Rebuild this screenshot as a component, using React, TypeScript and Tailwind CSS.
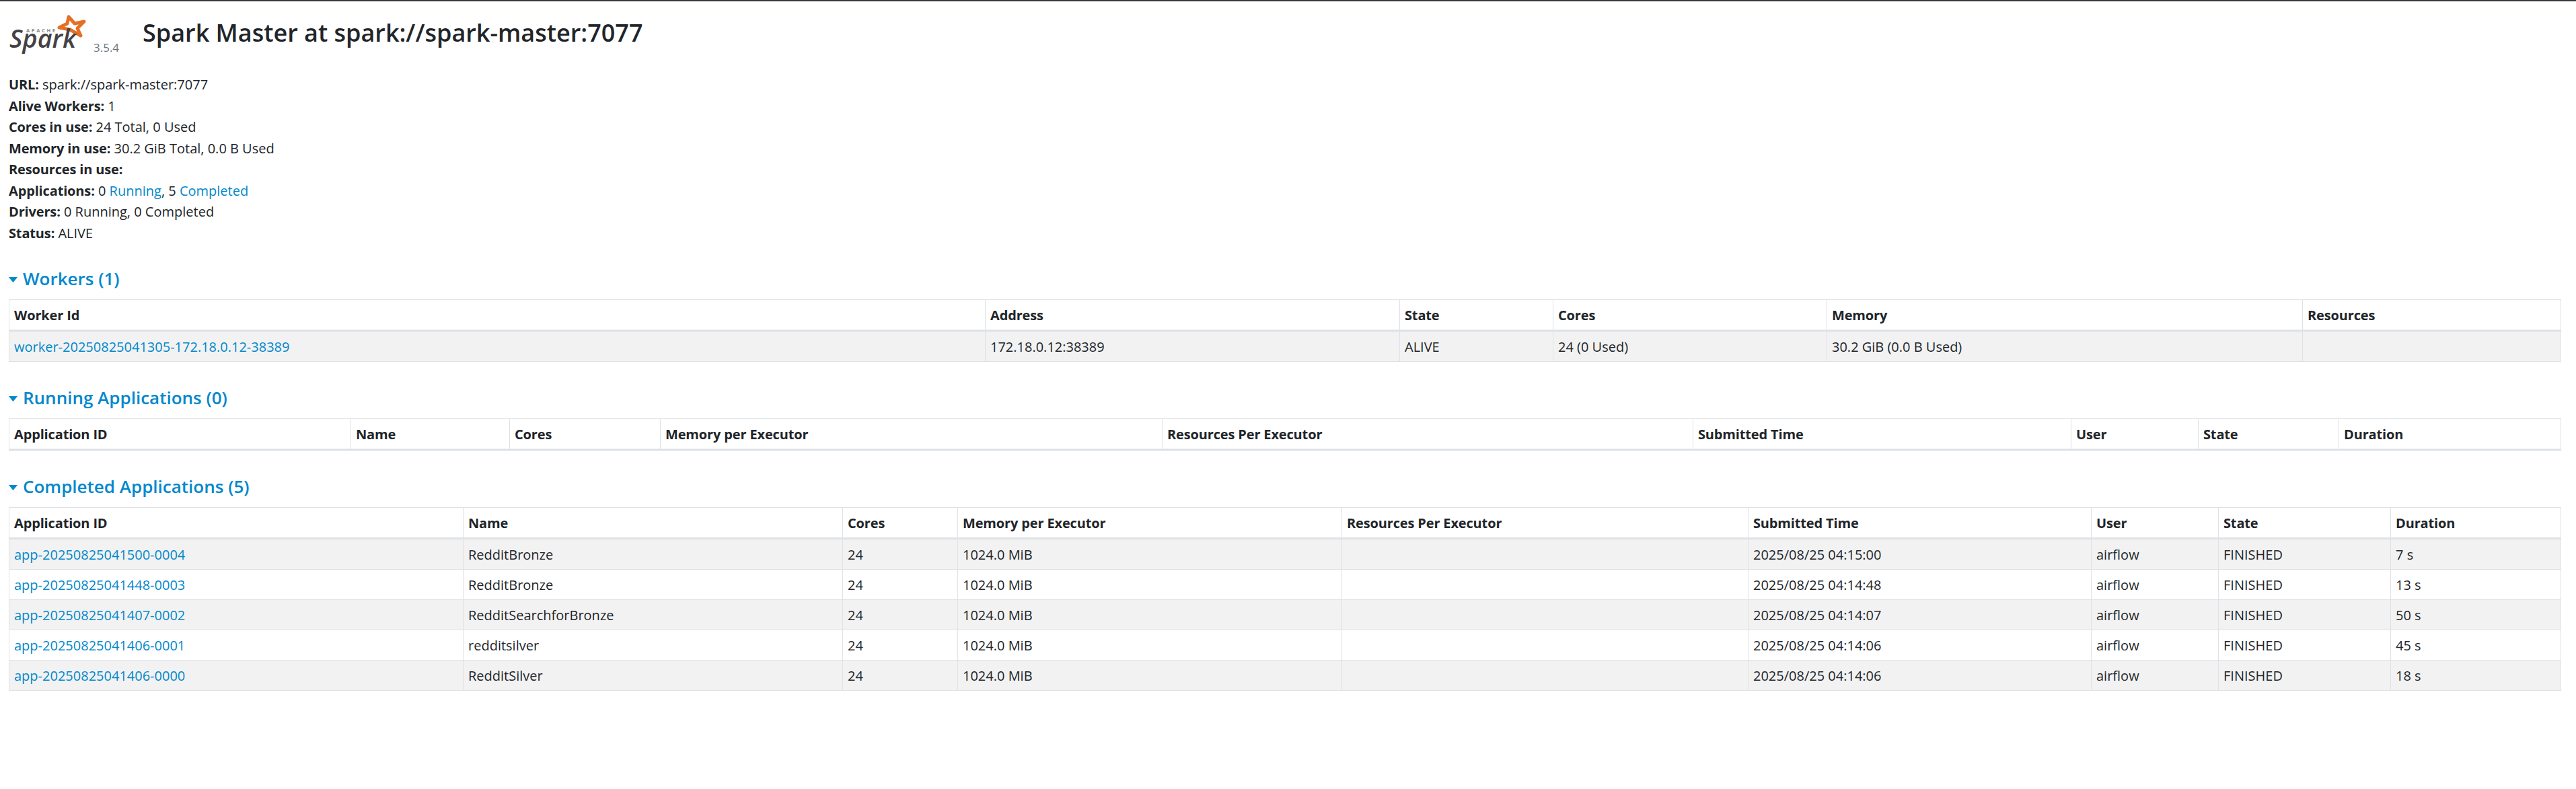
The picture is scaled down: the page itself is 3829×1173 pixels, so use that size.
const workerColumns = [
  { label: "Worker Id", width: "w-[1451px]" },
  { label: "Address", width: "w-[616px]" },
  { label: "State", width: "w-[228px]" },
  { label: "Cores", width: "w-[407px]" },
  { label: "Memory", width: "w-[707px]" },
  { label: "Resources", width: "w-[385px]" },
];

const runningColumns = [
  { label: "Application ID", width: "w-[508px]" },
  { label: "Name", width: "w-[236px]" },
  { label: "Cores", width: "w-[224px]" },
  { label: "Memory per Executor", width: "w-[746px]" },
  { label: "Resources Per Executor", width: "w-[789px]" },
  { label: "Submitted Time", width: "w-[562px]" },
  { label: "User", width: "w-[189px]" },
  { label: "State", width: "w-[209px]" },
  { label: "Duration", width: "w-[331px]" },
];

const completedColumns = [
  { label: "Application ID", width: "w-[675px]" },
  { label: "Name", width: "w-[564px]" },
  { label: "Cores", width: "w-[171px]" },
  { label: "Memory per Executor", width: "w-[571px]" },
  { label: "Resources Per Executor", width: "w-[604px]" },
  { label: "Submitted Time", width: "w-[510px]" },
  { label: "User", width: "w-[189px]" },
  { label: "State", width: "w-[256px]" },
  { label: "Duration", width: "w-[254px]" },
];

const completedApps = [
  ["app-20250825041500-0004", "RedditBronze", "2025/08/25 04:15:00", "7 s"],
  ["app-20250825041448-0003", "RedditBronze", "2025/08/25 04:14:48", "13 s"],
  ["app-20250825041407-0002", "RedditSearchforBronze", "2025/08/25 04:14:07", "50 s"],
  ["app-20250825041406-0001", "redditsilver", "2025/08/25 04:14:06", "45 s"],
  ["app-20250825041406-0000", "RedditSilver", "2025/08/25 04:14:06", "18 s"],
];

const Logo = () => (
  <svg viewBox="13 12 126 72" width="126" height="72" className="shrink-0">
    <polygon
      points="102,25 111,35 125,32 115,42 120,53 104,44 88,41 100,35"
      fill="none"
      stroke="#e56f26"
      strokeWidth="5"
      strokeLinejoin="round"
    />
    <text x="39" y="48" fontFamily="'Open Sans', sans-serif" fontSize="7.5" fontWeight="700" fill="#8a8a8a" textLength="43">
      APACHE
    </text>
    <text
      x="14"
      y="71"
      fontFamily="'Open Sans', sans-serif"
      fontSize="38"
      fontWeight="600"
      fontStyle="italic"
      fill="#444246"
      textLength="99"
      lengthAdjust="spacingAndGlyphs"
    >
      Spark
    </text>
  </svg>
);

const Caret = () => (
  <svg viewBox="0 0 13 8" width="13" height="8" className="mt-[3px] shrink-0">
    <polygon points="0,0 13,0 6.5,8" fill="#0088cc" />
  </svg>
);

const SectionTitle = ({ title }: { title: string }) => (
  <h4 className="flex h-[38px] items-center gap-[8px] pb-[3px] text-[26px] leading-[35px] font-semibold text-[#0088cc]">
    <Caret />
    <span>{title}</span>
  </h4>
);

const HeaderRow = ({ columns }: { columns: { label: string; width: string }[] }) => (
  <thead>
    <tr>
      {columns.map((col, i) => (
        <th
          key={col.label}
          className={`h-[48px] border-t border-b-[3px] border-l border-[#dee2e6] pt-[1px] pl-[7px] text-left align-middle font-bold tracking-[-0.15px] ${col.width} ${i === columns.length - 1 ? "border-r" : ""}`}
        >
          {col.label}
        </th>
      ))}
    </tr>
  </thead>
);

const Cell = ({ children, last }: { children?: React.ReactNode; last?: boolean }) => (
  <td className={`h-[45px] border-b border-l border-[#dee2e6] pt-[2px] pl-[7px] align-middle ${last ? "border-r" : ""}`}>
    {children}
  </td>
);

const Info = ({ label, children }: { label: string; children?: React.ReactNode }) => (
  <li className="h-[31.5px]">
    <strong className="font-bold tracking-[-0.15px]">{label}</strong> {children}
  </li>
);

const tableClass = "w-[3794px] table-fixed border-separate border-spacing-0";

export default function App() {
  return (
    <div className="min-h-[1173px] bg-white text-[20px] leading-[31.5px] text-[#212529] [font-family:'Open_Sans',sans-serif]">
      <div className="h-[2px] bg-[#343a40]" />
      <div className="px-[13px]">
        <header className="flex h-[108px] items-start">
          <div className="pt-[10px]">
            <Logo />
          </div>
          <span className="mt-[57px] w-[73px] text-[17px] leading-[24px] font-medium text-[#6c757d]">3.5.4</span>
          <h3 className="mt-[20px] text-[36px] leading-[54px] font-semibold">Spark Master at spark://spark-master:7077</h3>
        </header>

        <ul>
          <Info label="URL:">spark://spark-master:7077</Info>
          <Info label="Alive Workers:">1</Info>
          <Info label="Cores in use:">24 Total, 0 Used</Info>
          <Info label="Memory in use:">30.2 GiB Total, 0.0 B Used</Info>
          <Info label="Resources in use:" />
          <Info label="Applications:">
            0 <a className="text-[#0088cc]">Running</a>, 5 <a className="text-[#0088cc]">Completed</a>
          </Info>
          <Info label="Drivers:">0 Running, 0 Completed</Info>
          <Info label="Status:">ALIVE</Info>
        </ul>

        <section className="mt-[35px]">
          <SectionTitle title="Workers (1)" />
          <table className={`mt-[10px] ${tableClass}`}>
            <HeaderRow columns={workerColumns} />
            <tbody>
              <tr className="bg-[#f2f2f2]">
                <Cell>
                  <a className="text-[#0088cc]">worker-20250825041305-172.18.0.12-38389</a>
                </Cell>
                <Cell>172.18.0.12:38389</Cell>
                <Cell>ALIVE</Cell>
                <Cell>24 (0 Used)</Cell>
                <Cell>30.2 GiB (0.0 B Used)</Cell>
                <Cell last />
              </tr>
            </tbody>
          </table>
        </section>

        <section className="mt-[36px]">
          <SectionTitle title="Running Applications (0)" />
          <table className={`mt-[10px] ${tableClass}`}>
            <HeaderRow columns={runningColumns} />
          </table>
        </section>

        <section className="mt-[36px]">
          <SectionTitle title="Completed Applications (5)" />
          <table className={`mt-[10px] ${tableClass}`}>
            <HeaderRow columns={completedColumns} />
            <tbody>
              {completedApps.map(([id, name, submitted, duration], i) => (
                <tr key={id} className={i % 2 === 0 ? "bg-[#f2f2f2]" : "bg-white"}>
                  <Cell>
                    <a className="text-[#0088cc]">{id}</a>
                  </Cell>
                  <Cell>{name}</Cell>
                  <Cell>24</Cell>
                  <Cell>1024.0 MiB</Cell>
                  <Cell />
                  <Cell>{submitted}</Cell>
                  <Cell>airflow</Cell>
                  <Cell>FINISHED</Cell>
                  <Cell last>{duration}</Cell>
                </tr>
              ))}
            </tbody>
          </table>
        </section>
      </div>
    </div>
  );
}
